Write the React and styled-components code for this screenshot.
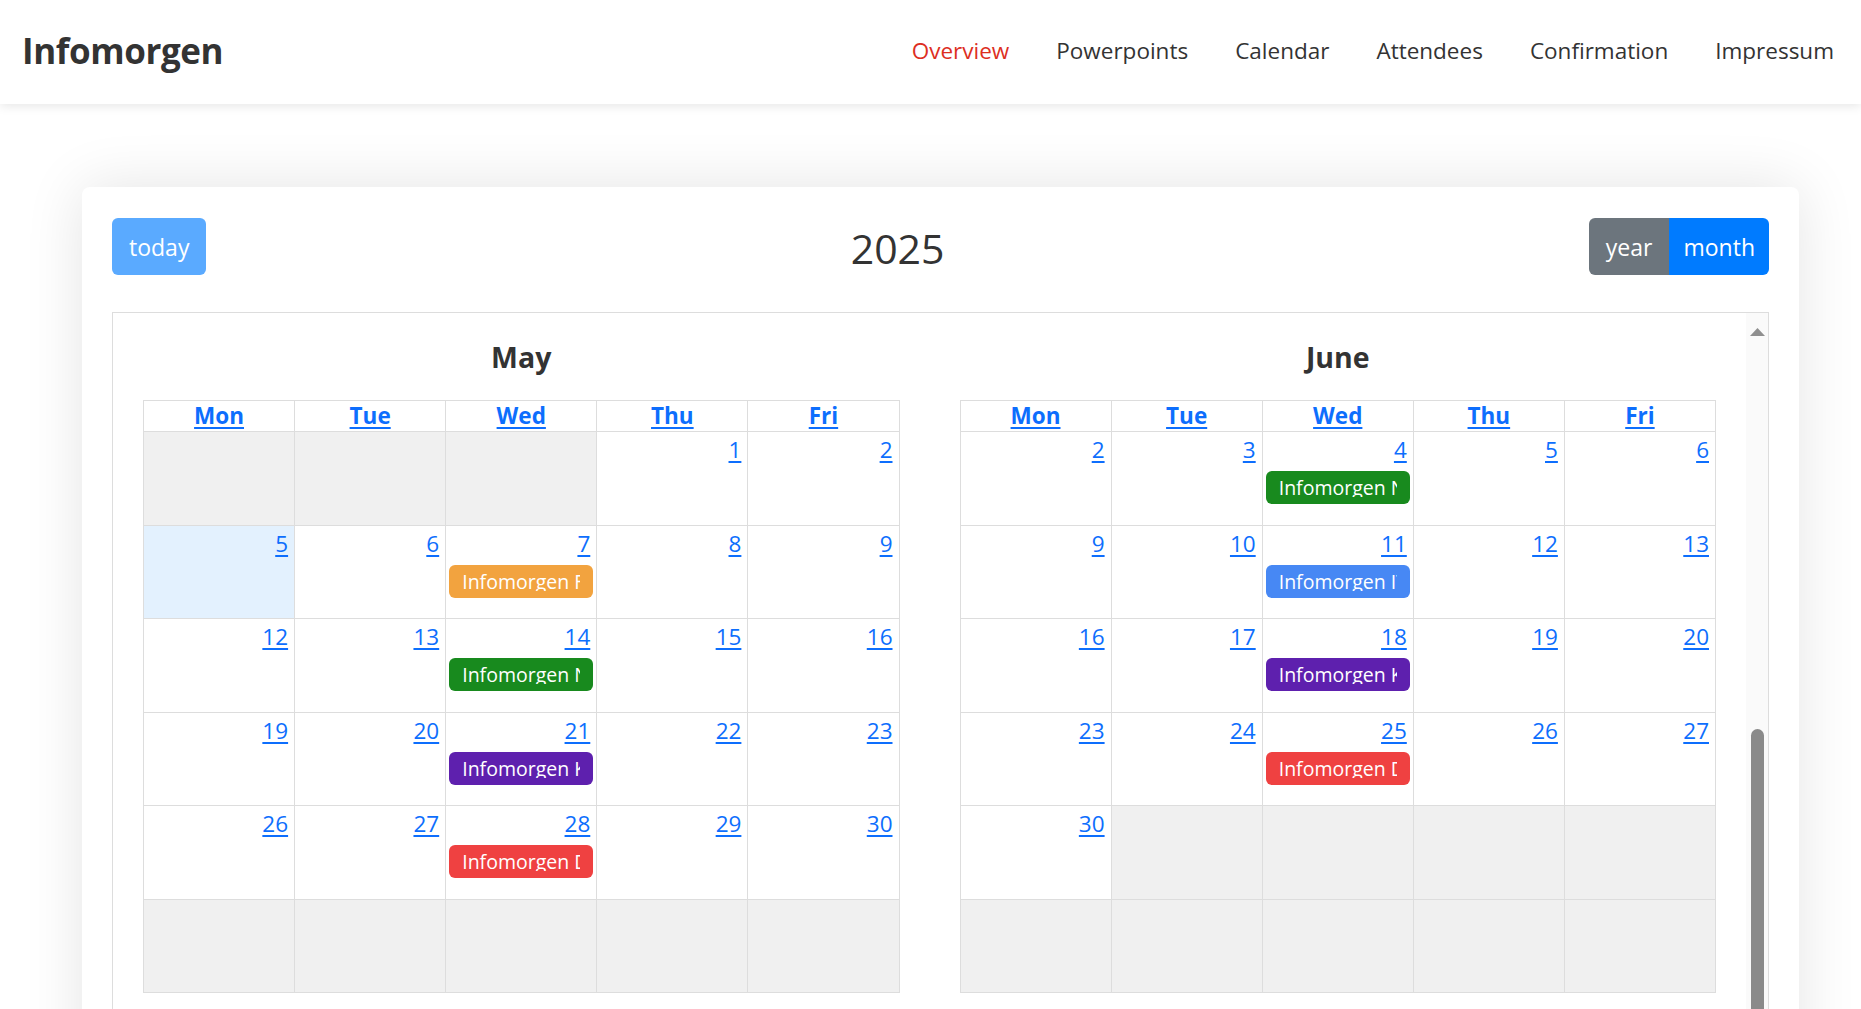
import styled, { createGlobalStyle } from 'styled-components';

const GlobalStyle = createGlobalStyle`
  html, body {
    margin: 0;
    overflow: hidden;
    background: #fff;
  }
  body {
    font-family: "Open Sans", "Noto Sans", Arial, sans-serif;
    color: #333;
  }
  * { box-sizing: border-box; }
`;

const NavBar = styled.nav`
  position: relative;
  z-index: 2;
  height: 104px;
  display: flex;
  align-items: center;
  padding: 0 27px 3px 22px;
  background: #fff;
  box-shadow: 0 2px 10px rgba(0, 0, 0, 0.1);
`;

const Brand = styled.a`
  font-size: 35px;
  font-weight: 700;
  color: #333;
  text-decoration: none;
  letter-spacing: -0.4px;
`;

const NavList = styled.ul`
  display: flex;
  gap: 47px;
  margin: 0 0 0 auto;
  padding: 0;
  list-style: none;
`;

const NavLink = styled.a`
  font-size: 22.5px;
  color: ${p => (p.$active ? '#dd2f1f' : '#333')};
  text-decoration: none;
`;

const Main = styled.main`
  padding: 83px 62px 0 82px;
`;

const Card = styled.section`
  background: #fff;
  border-radius: 8px;
  box-shadow: 0 0 60px rgba(0, 0, 0, 0.11);
  padding: 31px 30px 30px 30px;
`;

const Toolbar = styled.div`
  display: flex;
  justify-content: space-between;
  align-items: center;
  margin-bottom: 37px;
`;

const TodayButton = styled.button`
  height: 57px;
  padding: 0 17px;
  border: none;
  border-radius: 6px;
  background: #5aaaff;
  color: #fff;
  font-family: inherit;
  font-size: 23px;
`;

const Title = styled.h2`
  margin: 0;
  padding-top: 4px;
  font-size: 41px;
  font-weight: 500;
  line-height: 1;
  color: #333;
`;

const ButtonGroup = styled.div`
  display: flex;
  border-radius: 6px;
  overflow: hidden;
`;

const GroupButton = styled.button`
  height: 57px;
  padding: 0 ${p => (p.$wide ? 14 : 17)}px;
  border: none;
  background: ${p => (p.$active ? '#007bff' : '#6c757d')};
  color: #fff;
  font-family: inherit;
  font-size: 23px;
`;

const YearView = styled.div`
  display: flex;
  border: 1px solid #ddd;
`;

const MonthsGrid = styled.div`
  flex: 1;
  display: grid;
  grid-template-columns: 1fr 1fr;
`;

const ScrollBar = styled.div`
  width: 22px;
  display: flex;
  flex-direction: column;
  align-items: center;
  background: #fafafa;
`;

const ScrollArrow = styled.svg`
  display: block;
  margin-top: 15px;
`;

const ScrollThumb = styled.div`
  width: 13px;
  height: 420px;
  margin-top: 393px;
  border-radius: 7px;
  background: #8a8a8a;
`;

const Month = styled.div`
  padding: 24px 30px 30px;
`;

const MonthTitle = styled.h3`
  margin: 0 0 23px;
  height: 40px;
  line-height: 40px;
  text-align: center;
  font-size: 28.5px;
  font-weight: 700;
  color: #333;
`;

const DayGrid = styled.div`
  display: grid;
  grid-template-columns: repeat(5, 1fr);
  grid-template-rows: 31px repeat(6, 93.5px);
  border-top: 1px solid #ddd;
  border-left: 1px solid #ddd;
`;

const DayHeader = styled.div`
  border-right: 1px solid #ddd;
  border-bottom: 1px solid #ddd;
  text-align: center;
  line-height: 30px;
`;

const HeaderLink = styled.a`
  font-size: 22.5px;
  font-weight: 700;
  color: #0d6efd;
  text-decoration: underline;
  text-underline-offset: 3px;
`;

const DayCell = styled.div`
  border-right: 1px solid #ddd;
  border-bottom: 1px solid #ddd;
  background: ${p => (p.$other ? '#f0f0f0' : p.$today ? '#e3f1fe' : '#fff')};
  overflow: hidden;
`;

const DayNumber = styled.a`
  display: block;
  padding: 0 6px 0 0;
  text-align: right;
  font-size: 22.5px;
  line-height: 36px;
  color: #0d6efd;
  text-decoration: underline;
  text-underline-offset: 3px;
`;

const EventChip = styled.div`
  height: 33px;
  margin: 3px 3px 0;
  padding: 0 13px;
  border-radius: 6px;
  background: ${p => p.$color};
  color: #fff;
`;

// clipped like the calendar does: no descenders, no overflow to the right
const EventTitle = styled.div`
  height: 26px;
  line-height: 33px;
  font-size: 19.5px;
  white-space: nowrap;
  overflow: hidden;
`;

const MONTHS = ['January', 'February', 'March', 'April', 'May', 'June',
  'July', 'August', 'September', 'October', 'November', 'December'];
const WEEKDAYS = ['Mon', 'Tue', 'Wed', 'Thu', 'Fri'];
const YEAR = 2025;
// only the months that are in view
const VISIBLE_MONTHS = [4, 5];

const EVENTS = {
  '4-7': { title: 'Infomorgen Finanzen', color: '#f2a33f' },
  '4-14': { title: 'Infomorgen Netzwerk', color: '#188a1e' },
  '4-21': { title: 'Infomorgen Kommunikation', color: '#5e20ae' },
  '4-28': { title: 'Infomorgen Digitalisierung', color: '#ef4141' },
  '5-4': { title: 'Infomorgen Netzwerk', color: '#188a1e' },
  '5-11': { title: 'Infomorgen IT-Sicherheit', color: '#4788f4' },
  '5-18': { title: 'Infomorgen Kommunikation', color: '#5e20ae' },
  '5-25': { title: 'Infomorgen Digitalisierung', color: '#ef4141' },
};

// weeks start on monday, weekends hidden, always 6 rows
function buildCells(month) {
  const first = new Date(YEAR, month, 1);
  while (first.getDay() === 0 || first.getDay() === 6) first.setDate(first.getDate() + 1);
  const start = new Date(first);
  start.setDate(first.getDate() - ((first.getDay() + 6) % 7));
  const cells = [];
  for (let w = 0; w < 6; w++) {
    for (let d = 0; d < 5; d++) {
      const date = new Date(start);
      date.setDate(start.getDate() + w * 7 + d);
      cells.push({
        key: `${w}-${d}`,
        day: date.getDate(),
        other: date.getMonth() !== month,
        today: date.getMonth() === 4 && date.getDate() === 5,
      });
    }
  }
  return cells;
}

const MonthBlock = ({ month }) => (
  <Month>
    <MonthTitle>{MONTHS[month]}</MonthTitle>
    <DayGrid>
      {WEEKDAYS.map(d => (
        <DayHeader key={d}><HeaderLink href="#">{d}</HeaderLink></DayHeader>
      ))}
      {buildCells(month).map(c => {
        const ev = !c.other && EVENTS[`${month}-${c.day}`];
        return (
          <DayCell key={c.key} $other={c.other} $today={c.today}>
            {!c.other && <DayNumber href="#">{c.day}</DayNumber>}
            {ev && (
              <EventChip $color={ev.color}>
                <EventTitle>{ev.title}</EventTitle>
              </EventChip>
            )}
          </DayCell>
        );
      })}
    </DayGrid>
  </Month>
);

export default function App() {
  return (
    <>
      <GlobalStyle />
      <NavBar>
        <Brand href="#">Infomorgen</Brand>
        <NavList>
          <li><NavLink href="#" $active>Overview</NavLink></li>
          <li><NavLink href="#">Powerpoints</NavLink></li>
          <li><NavLink href="#">Calendar</NavLink></li>
          <li><NavLink href="#">Attendees</NavLink></li>
          <li><NavLink href="#">Confirmation</NavLink></li>
          <li><NavLink href="#">Impressum</NavLink></li>
        </NavList>
      </NavBar>
      <Main>
        <Card>
          <Toolbar>
            <TodayButton>today</TodayButton>
            <Title>2025</Title>
            <ButtonGroup>
              <GroupButton>year</GroupButton>
              <GroupButton $active $wide>month</GroupButton>
            </ButtonGroup>
          </Toolbar>
          <YearView>
            <MonthsGrid>
              {VISIBLE_MONTHS.map(m => <MonthBlock key={m} month={m} />)}
            </MonthsGrid>
            <ScrollBar>
              <ScrollArrow width="15" height="8" viewBox="0 0 15 8">
                <polygon points="7.5,0 15,8 0,8" fill="#8f8f8f" />
              </ScrollArrow>
              <ScrollThumb />
            </ScrollBar>
          </YearView>
        </Card>
      </Main>
    </>
  );
}
